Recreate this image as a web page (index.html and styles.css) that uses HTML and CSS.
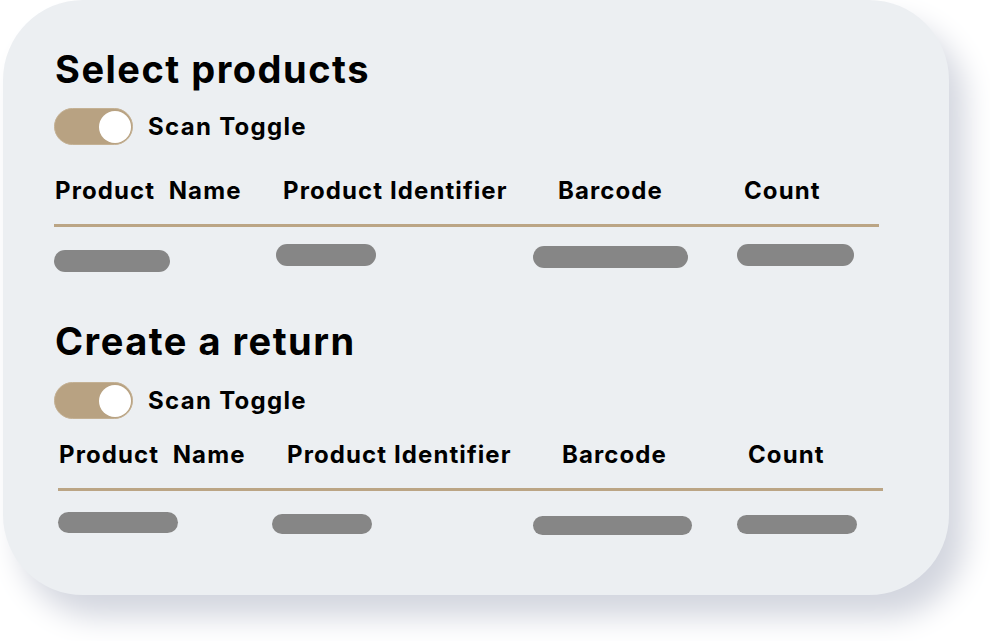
FILE: index.html
```html
<!DOCTYPE html>
<html lang="en">
<head>
<meta charset="utf-8">
<title>Select products</title>
<link rel="stylesheet" href="styles.css">
</head>
<body>
<div class="page">
  <div class="card">
    <section class="section section--select">
      <h1 class="title">Select products</h1>
      <div class="toggle-row">
        <span class="toggle"><span class="knob"></span></span>
        <span class="toggle-label">Scan Toggle</span>
      </div>
      <div class="table">
        <div class="head">
          <span class="th">Product&nbsp; Name</span>
          <span class="th">Product Identifier</span>
          <span class="th">Barcode</span>
          <span class="th">Count</span>
        </div>
        <div class="rule"></div>
        <div class="bars">
          <span class="bar b1-name"></span>
          <span class="bar b1-id"></span>
          <span class="bar b1-code"></span>
          <span class="bar b1-count"></span>
        </div>
      </div>
    </section>
    <section class="section section--return">
      <h1 class="title">Create a return</h1>
      <div class="toggle-row">
        <span class="toggle"><span class="knob"></span></span>
        <span class="toggle-label">Scan Toggle</span>
      </div>
      <div class="table">
        <div class="head">
          <span class="th">Product&nbsp; Name</span>
          <span class="th">Product Identifier</span>
          <span class="th">Barcode</span>
          <span class="th">Count</span>
        </div>
        <div class="rule"></div>
        <div class="bars">
          <span class="bar b2-name"></span>
          <span class="bar b2-id"></span>
          <span class="bar b2-code"></span>
          <span class="bar b2-count"></span>
        </div>
      </div>
    </section>
  </div>
</div>
</body>
</html>
```

FILE: styles.css
```css
html, body {
  margin: 0;
  padding: 0;
  background: #ffffff;
}

body {
  font-family: Inter, "Noto Sans", "Liberation Sans", sans-serif;
  color: #000000;
  width: 990px;
  height: 641px;
  overflow: hidden;
}

.page {
  padding-left: 3px;
}

.card {
  width: 946px;
  height: 595px;
  box-sizing: border-box;
  background: #eceff2;
  border-radius: 80px;
  box-shadow: 16px 22px 30px #d3d6df;
  padding: 46px 0 0 52px;
}

.title {
  margin: 0;
  font-size: 38px;
  line-height: 46px;
  font-weight: 700;
  letter-spacing: 1.5px;
}

.toggle-row {
  display: flex;
  align-items: center;
  gap: 15px;
  margin-top: 16px;
  margin-left: -1px;
}

.section--return .toggle-row {
  margin-top: 18px;
}

.toggle {
  width: 79px;
  height: 37px;
  box-sizing: border-box;
  border-radius: 19px;
  background: #b8a282;
  border: 1px solid #c4b194;
  display: flex;
  align-items: center;
  justify-content: flex-end;
  padding-right: 1px;
}

.knob {
  width: 32px;
  height: 32px;
  border-radius: 50%;
  background: #ffffff;
}

.toggle-label {
  font-size: 24px;
  line-height: 28px;
  font-weight: 700;
  letter-spacing: 1.3px;
}

.table {
  width: 825px;
  margin-left: -1px;
}

.section--return .table {
  margin-left: 3px;
}

.head {
  display: grid;
  grid-template-columns: 228px 275px 186px 1fr;
  margin-top: 32px;
}

.section--return .head {
  margin-top: 22px;
}

.th {
  font-size: 24px;
  line-height: 28px;
  font-weight: 700;
  padding-left: 1px;
  white-space: nowrap;
  letter-spacing: 1.1px;
}

.rule {
  height: 3px;
  background: #bba585;
  margin-top: 19px;
}

.bars {
  display: flex;
  align-items: flex-start;
}

.bar {
  display: block;
  height: 22px;
  border-radius: 11px;
  background: #868686;
}

/* row 1 */
.b1-name  { width: 116px; margin-top: 23px; }
.b1-id    { width: 100px; margin-top: 17px; margin-left: 106px; }
.b1-code  { width: 155px; margin-top: 19px; margin-left: 157px; }
.b1-count { width: 117px; margin-top: 17px; margin-left: 49px; }

/* row 2 */
.b2-name  { width: 120px; height: 21px; margin-top: 21px; }
.b2-id    { width: 100px; height: 20px; margin-top: 23px; margin-left: 94px; }
.b2-code  { width: 159px; height: 19px; margin-top: 25px; margin-left: 161px; }
.b2-count { width: 120px; height: 19px; margin-top: 24px; margin-left: 45px; }

.section--return {
  margin-top: 46px;
}
```
